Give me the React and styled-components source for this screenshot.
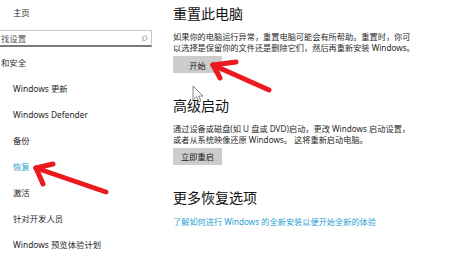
import React from 'react'
import styled, { createGlobalStyle } from 'styled-components'
import { Search } from 'lucide-react'

const GlobalStyle = createGlobalStyle`
    html, body {
        margin: 0;
        padding: 0;
        background: #ffffff;
        overflow: hidden;
    }
    body {
        font-family: "Noto Sans", "Noto Sans CJK SC", sans-serif;
        color: #222;
    }
`

const navItems = [
    'Windows 更新',
    'Windows Defender',
    '备份',
    '恢复',
    '激活',
    '针对开发人员',
    'Windows 预览体验计划',
]

function App() {
    return (
        <Page>
            <GlobalStyle />
            <Sidebar>
                <Home>主页</Home>
                <SearchBox>
                    <span>找设置</span>
                    <SearchIcon size={7} strokeWidth={2} />
                </SearchBox>
                <Section>和安全</Section>
                <Nav>
                    {navItems.map((item) => (
                        <NavItem key={item} active={item === '恢复'}>{item}</NavItem>
                    ))}
                </Nav>
            </Sidebar>
            <Main>
                <Heading>重置此电脑</Heading>
                <Text>
                    如果你的电脑运行异常，重置电脑可能会有所帮助。重置时，你可<br />
                    以选择是保留你的文件还是删除它们，然后再重新安装 Windows。
                </Text>
                <Button>开始</Button>
                <Heading gap={23}>高级启动</Heading>
                <Text gap={7}>
                    通过设备或磁盘(如 U 盘或 DVD)启动，更改 Windows 启动设置，<br />
                    或者从系统映像还原 Windows。 这将重新启动电脑。
                </Text>
                <Button gap={2.5}>立即重启</Button>
                <Heading gap={23}>更多恢复选项</Heading>
                <Link href="#">了解如何进行 Windows 的全新安装以便开始全新的体验</Link>
            </Main>

            {/* red marker arrows and mouse pointer drawn over the screenshot */}
            <Overlay width="458" height="273" viewBox="0 0 458 273">
                <g stroke="#ec1a1f" strokeWidth="5" strokeLinecap="round" fill="none">
                    <line x1="213" y1="65" x2="269" y2="90" />
                    <line x1="213" y1="65" x2="236" y2="62" />
                    <line x1="213" y1="65" x2="220" y2="78" />
                    <line x1="36" y1="168" x2="106" y2="192" />
                    <line x1="36" y1="168" x2="53" y2="164" />
                    <line x1="36" y1="168" x2="43" y2="184" />
                </g>
                <path
                    d="M193 86 L193 100 L196.5 96.8 L199 102 L201 101 L198.6 96 L203 96 Z"
                    fill="#ffffff"
                    stroke="#6a6a6a"
                    strokeWidth="0.8"
                    strokeLinejoin="round"
                />
            </Overlay>
        </Page>
    )
}

export default App

const Page = styled.div`
    position: relative;
    width: 458px;
    height: 273px;
    display: flex;
    align-items: flex-start;
    background: #fff;
    overflow: hidden;
`

const Sidebar = styled.div`
    width: 152px;
    flex-shrink: 0;
    display: flex;
    flex-direction: column;
    font-size: 8.4px;
    color: #1f1f1f;
`

const Home = styled.div`
    height: 26px;
    line-height: 26px;
    padding-left: 13px;
`

const SearchBox = styled.div`
    margin-top: 4px;
    height: 14px;
    display: flex;
    align-items: center;
    justify-content: space-between;
    padding: 0 3px 0 1px;
    border-top: 1px solid #c8c8c8;
    border-right: 1px solid #c8c8c8;
    border-bottom: 2px solid #7a7a7a;
    color: #555;
`

const SearchIcon = styled(Search)`
    color: #777;
    transform: scaleX(-1);
`

const Section = styled.div`
    margin-top: 6px;
    height: 20px;
    line-height: 20px;
    padding-left: 1px;
    color: #333;
`

const Nav = styled.div`
    margin-top: 3px;
    display: flex;
    flex-direction: column;
`

const NavItem = styled.div`
    height: 26px;
    line-height: 26px;
    padding-left: 13px;
    white-space: nowrap;
    color: ${props => props.active ? '#2b9fd3' : '#1f1f1f'};
`

const Main = styled.div`
    padding-left: 21px;
    display: flex;
    flex-direction: column;
    align-items: flex-start;
`

const Heading = styled.h2`
    margin: ${props => props.gap || 4}px 0 0;
    font-size: 14px;
    line-height: 20px;
    font-weight: 400;
    color: #111;
`

const Text = styled.p`
    margin: ${props => props.gap || 6.5}px 0 0;
    font-size: 8.2px;
    line-height: 11px;
    color: #2a2a2a;
    white-space: nowrap;
`

const Button = styled.div`
    margin-top: ${props => props.gap || 3.5}px;
    width: 49px;
    height: 17px;
    display: flex;
    align-items: center;
    justify-content: center;
    background: #cccccc;
    font-size: 8.2px;
    color: #1a1a1a;
`

const Link = styled.a`
    margin-top: 8px;
    font-size: 8.2px;
    line-height: 11.5px;
    color: #2b9fd3;
    text-decoration: none;
    white-space: nowrap;
`

const Overlay = styled.svg`
    position: absolute;
    left: 0;
    top: 0;
    pointer-events: none;
`
